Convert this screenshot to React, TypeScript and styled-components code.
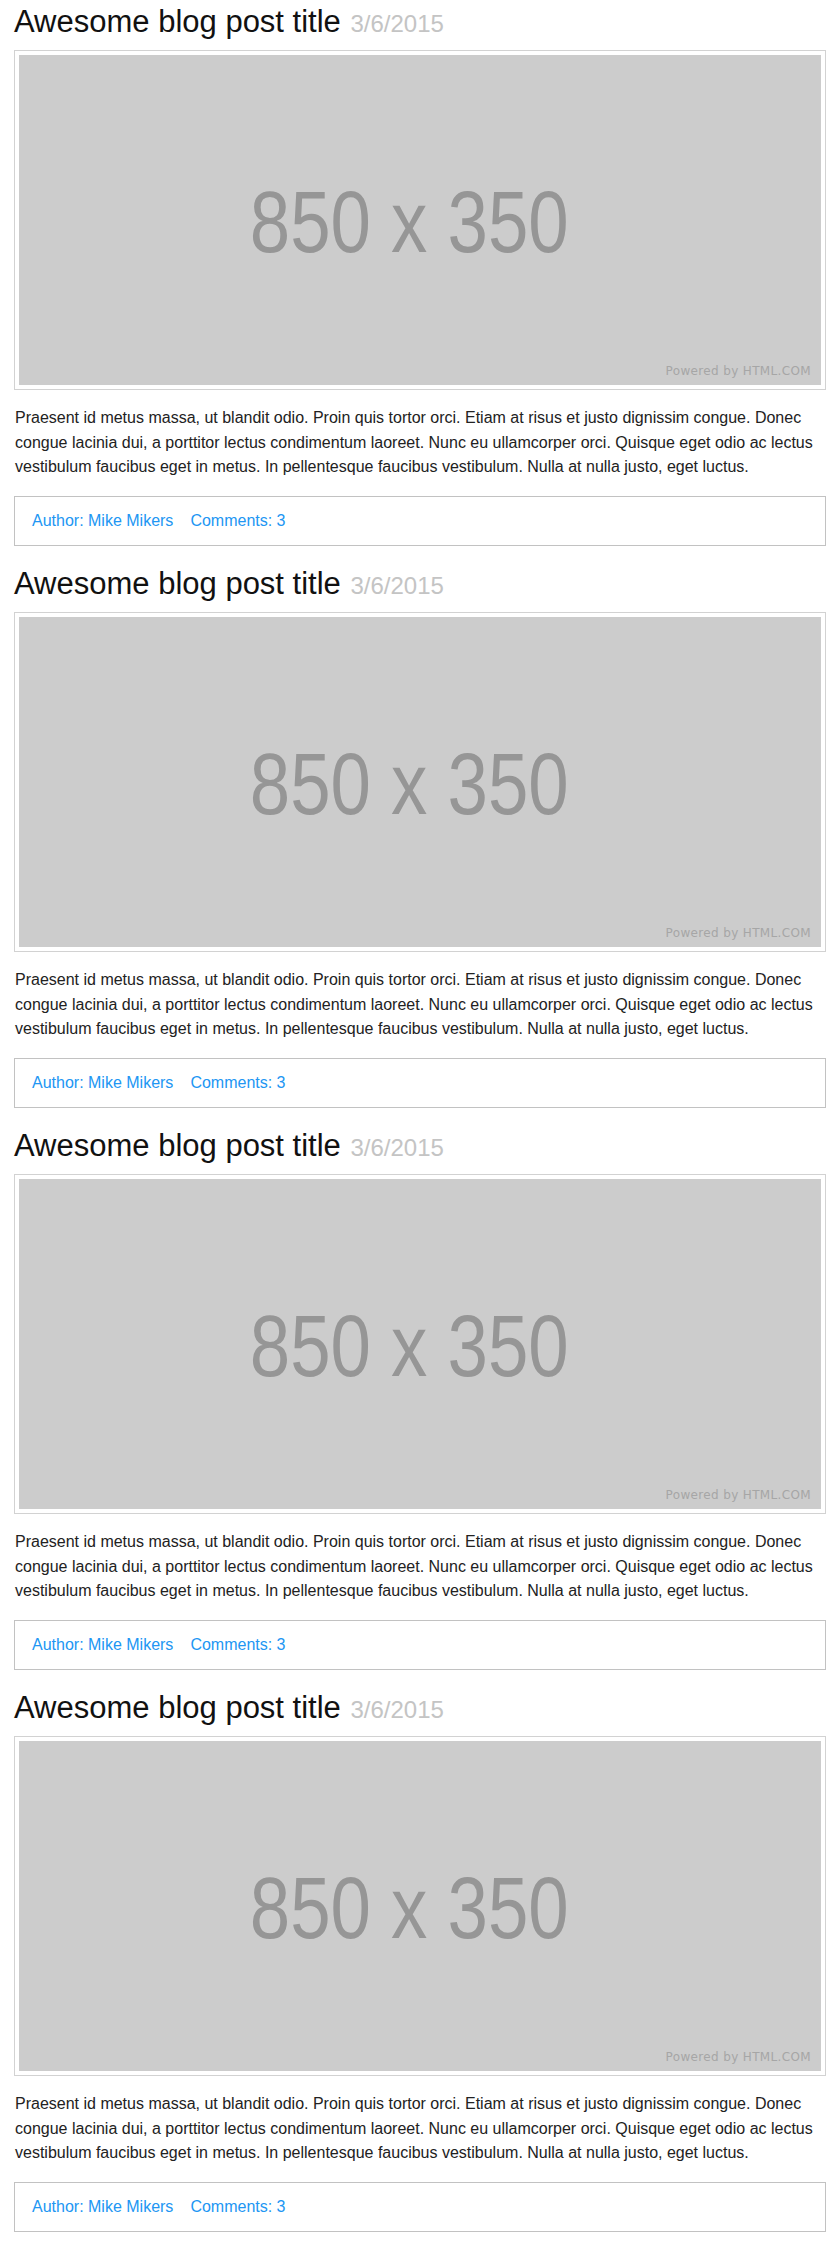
import React from "react";
import styled, { createGlobalStyle } from "styled-components";

const GlobalStyle = createGlobalStyle`
  html, body {
    margin: 0;
    padding: 0;
    background: #ffffff;
  }
  body {
    font-family: "Liberation Sans", Arial, sans-serif;
    color: #222222;
  }
`;

const Page = styled.main`
  padding: 0 13px 0 14px;
`;

const Post = styled.article`
  padding-top: 5px;
  padding-bottom: 16px;
`;

const Title = styled.h2`
  margin: 0 0 12px;
  font-size: 31px;
  line-height: 33px;
  font-weight: 400;
  color: #111111;
`;

const DateStamp = styled.small`
  font-size: 24px;
  line-height: 0;
  color: #c4c4c4;
  margin-left: 1px;
`;

const Frame = styled.figure`
  margin: 0;
  width: 812px;
  box-sizing: border-box;
  border: 1px solid #d2d2d2;
  padding: 4px;
`;

const Placeholder = styled.div`
  position: relative;
  height: 330px;
  background: #cccccc;
  display: flex;
  align-items: center;
  justify-content: center;
  padding-right: 21px;
  box-sizing: border-box;
`;

const Dimensions = styled.span`
  display: inline-block;
  font-family: "Liberation Sans", sans-serif;
  font-size: 88px;
  line-height: 1;
  color: #969696;
  margin-top: 4px;
  transform: scaleX(0.825);
  white-space: nowrap;
`;

const Credit = styled.span`
  position: absolute;
  right: 10px;
  bottom: 7px;
  font-family: "DejaVu Sans", sans-serif;
  font-size: 12px;
  letter-spacing: 0.35px;
  color: #a6a6a6;
`;

const Body = styled.p`
  margin: 16px 0 16px;
  font-size: 16px;
  line-height: 24.65px;
  color: #222222;
  padding-left: 1px;
`;

const Meta = styled.footer`
  width: 812px;
  box-sizing: border-box;
  border: 1px solid #c2c2c2;
  padding: 15px 17px;
  display: flex;
  gap: 17px;
  font-size: 16px;
  line-height: 18px;
`;

const MetaLink = styled.a`
  color: #2196f3;
  text-decoration: none;
`;

const text =
  "Praesent id metus massa, ut blandit odio. Proin quis tortor orci. Etiam at risus et justo dignissim congue. Donec congue lacinia dui, a porttitor lectus condimentum laoreet. Nunc eu ullamcorper orci. Quisque eget odio ac lectus vestibulum faucibus eget in metus. In pellentesque faucibus vestibulum. Nulla at nulla justo, eget luctus.";

const posts = [1, 2, 3, 4];

export default function App() {
  return (
    <>
      <GlobalStyle />
      <Page>
        {posts.map((id) => (
          <Post key={id}>
            <Title>
              Awesome blog post title <DateStamp>3/6/2015</DateStamp>
            </Title>
            <Frame>
              <Placeholder>
                <Dimensions>850 x 350</Dimensions>
                <Credit>Powered by HTML.COM</Credit>
              </Placeholder>
            </Frame>
            <Body>{text}</Body>
            <Meta>
              <MetaLink href="#">Author: Mike Mikers</MetaLink>
              <MetaLink href="#">Comments: 3</MetaLink>
            </Meta>
          </Post>
        ))}
      </Page>
    </>
  );
}
